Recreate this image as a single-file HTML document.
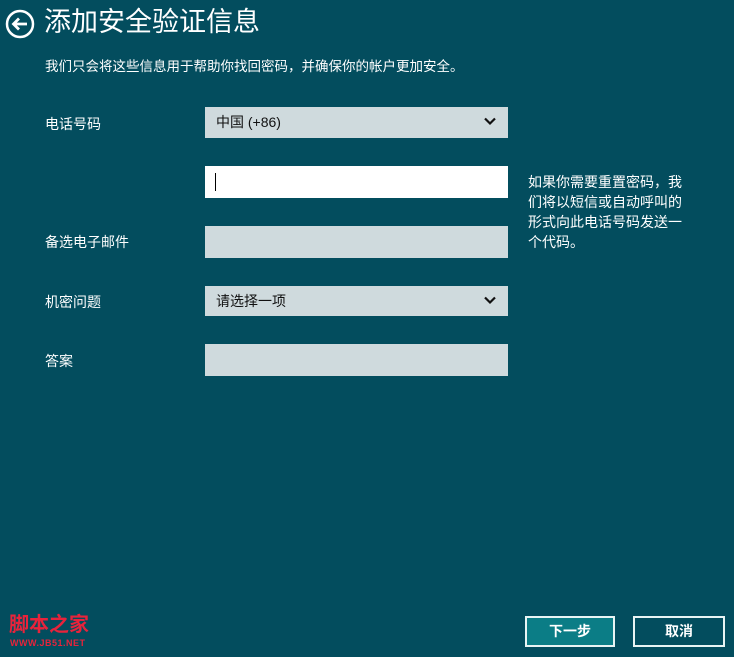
<!DOCTYPE html>
<html><head><meta charset="utf-8"><style>
body{margin:0;width:734px;height:657px;background:#034d5e;position:relative;overflow:hidden;font-family:"Liberation Sans","Noto Sans CJK SC",sans-serif;color:#fff}
.a{position:absolute}
.f{position:absolute;left:205px;width:303px;background:#cfdadd}
.l{position:absolute;left:45px;font-size:14px}
.dd{font-size:14px;color:#111;line-height:31px;padding-left:11px;box-sizing:border-box}
.chev{position:absolute;right:12px;top:10px}
.btn{position:absolute;top:616px;height:31px;box-sizing:border-box;border:2px solid #e8f4f4;font-size:14px;font-weight:bold;text-align:center;line-height:27px}
</style></head><body>
<svg class="a" style="left:5px;top:9px" width="30" height="30" viewBox="0 0 30 30"><circle cx="15" cy="15" r="13" fill="none" stroke="#fff" stroke-width="2.5"/><path d="M22 15H9M14 9.5L8.5 15L14 20.5" fill="none" stroke="#fff" stroke-width="2.8"/></svg>
<div class="a" style="left:44px;top:4px;font-size:27px;line-height:36px">添加安全验证信息</div>
<div class="a" style="left:45px;top:55px;font-size:13.5px">我们只会将这些信息用于帮助你找回密码，并确保你的帐户更加安全。</div>
<div class="l" style="top:114px">电话号码</div>
<div class="f dd" style="top:107px;height:31px">中国 (+86)<svg class="chev" width="12" height="9" viewBox="0 0 12 9"><path d="M1 1.5L6 6.5L11 1.5" fill="none" stroke="#111" stroke-width="2.2"/></svg></div>
<div class="f" style="top:166px;height:32px;background:#fff"><div class="a" style="left:10px;top:7px;width:1px;height:18px;background:#000"></div></div>
<div class="a" style="left:528px;top:172px;font-size:14px;line-height:20px;width:200px;white-space:nowrap">如果你需要重置密码，我<br>们将以短信或自动呼叫的<br>形式向此电话号码发送一<br>个代码。</div>
<div class="l" style="top:232px">备选电子邮件</div>
<div class="f" style="top:226px;height:32px"></div>
<div class="l" style="top:292px">机密问题</div>
<div class="f dd" style="top:286px;height:30px;line-height:30px">请选择一项<svg class="chev" width="12" height="9" viewBox="0 0 12 9"><path d="M1 1.5L6 6.5L11 1.5" fill="none" stroke="#111" stroke-width="2.2"/></svg></div>
<div class="l" style="top:351px">答案</div>
<div class="f" style="top:344px;height:32px"></div>
<div class="a" style="left:9px;top:613px;font-size:20px;color:#e8233b;font-weight:bold;line-height:24px">脚本之家</div>
<div class="a" style="left:10px;top:638px;font-size:9px;color:#e8233b;font-weight:bold;letter-spacing:0.5px">WWW.JB51.NET</div>
<div class="btn" style="left:525px;width:90px;background:#0b7d86">下一步</div>
<div class="btn" style="left:633px;width:92px">取消</div>
</body></html>
